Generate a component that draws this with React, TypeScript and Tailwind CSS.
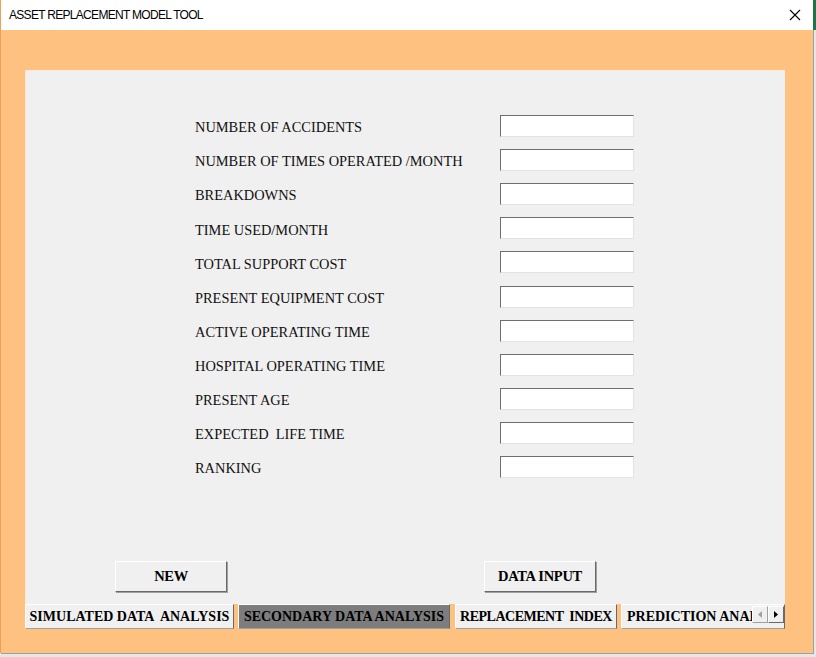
import React from "react";

const fields = [
  "NUMBER OF ACCIDENTS",
  "NUMBER OF TIMES OPERATED /MONTH",
  "BREAKDOWNS",
  "TIME USED/MONTH",
  "TOTAL SUPPORT COST",
  "PRESENT EQUIPMENT COST",
  "ACTIVE OPERATING TIME",
  "HOSPITAL OPERATING TIME",
  "PRESENT AGE",
  "EXPECTED  LIFE TIME",
  "RANKING",
];

const serif = { fontFamily: '"Liberation Serif", "Times New Roman", serif' };

function FormButton({ label }: { label: string }) {
  return (
    <button
      className="h-[31px] w-[112px] border border-t-white border-l-white border-r-[#696969] border-b-[#696969] bg-[#f0f0f0] text-[14.5px] font-bold tracking-[-0.3px] text-black shadow-[1px_1px_0_#a0a0a0] whitespace-pre"
      style={serif}
    >
      {label}
    </button>
  );
}

function Tab({ label, active, className }: { label: string; active?: boolean; className: string }) {
  return (
    <div
      className={`flex h-[25px] shrink-0 items-center justify-center border border-t-white border-l-white border-r-[#696969] border-b-[#a0a0a0] text-[14px] font-bold whitespace-pre ${className} ${
        active ? "bg-[#7d7d7d] text-black" : "bg-[#f0f0f0] text-black"
      }`}
      style={serif}
    >
      {label}
    </div>
  );
}

export default function App() {
  return (
    <div className="relative h-[657px] w-[816px] overflow-hidden bg-[#e7e7e7]">
      <div className="absolute right-0 top-0 h-[30px] w-[3px] bg-[#217346]" />
      <div className="flex h-[653px] w-[813px] flex-col border-l border-[#f0a050] shadow-[1px_1px_0_#a0a0a0]">
        <div className="flex h-[30px] shrink-0 items-center justify-between bg-white pl-[8px] pr-[12px]">
          <span className="text-[12px] text-black" style={{ fontFamily: '"Liberation Sans", Arial, sans-serif', letterSpacing: "-0.7px" }}>
            ASSET REPLACEMENT MODEL TOOL
          </span>
          <svg width="12" height="12" viewBox="0 0 12 12">
            <path d="M1 1 L11 11 M11 1 L1 11" stroke="#000" strokeWidth="1.1" />
          </svg>
        </div>
        <div className="flex flex-1 flex-col bg-[#ffc180] pl-[24px] pr-[28px] pt-[40px]">
          <div className="flex h-[534px] flex-col border-l border-t border-[#fde9d6] bg-[#f0f0f0]">
            <div className="flex flex-col pl-[169px] pt-[40px]">
              {fields.map((f) => (
                <div key={f} className="flex h-[34.1px] items-center">
                  <span className="w-[305px] whitespace-pre text-[14.4px] text-[#111]" style={serif}>
                    {f}
                  </span>
                  <div className="-mt-[4px] h-[22px] w-[134px] border border-t-[#6e6e6e] border-l-[#6e6e6e] border-r-[#e3e3e3] border-b-[#e3e3e3] bg-white" />
                </div>
              ))}
            </div>
            <div className="mt-auto flex pb-[12px] pl-[89px]">
              <FormButton label="NEW" />
              <div className="ml-[257px]">
                <FormButton label="DATA INPUT" />
              </div>
            </div>
          </div>
          <div className="flex h-[26px] w-[760px] overflow-hidden">
            <Tab label="SIMULATED DATA  ANALYSIS" className="w-[209px]" />
            <Tab label="SECONDARY DATA ANALYSIS" className="ml-[4px] w-[212px]" active />
            <Tab label="REPLACEMENT  INDEX" className="ml-[5px] w-[162px] tracking-[-0.5px]" />
            <div className="relative ml-[4px] flex h-[25px] w-[164px] shrink-0 items-center overflow-hidden border border-t-white border-l-white border-r-[#696969] border-b-[#a0a0a0] bg-[#f0f0f0] pl-[5px] text-[14px] font-bold whitespace-pre" style={serif}>
              PREDICTION ANALYSIS
              <div className="absolute right-0 top-[1px] flex h-[17px]">
                <div className="flex w-[16px] items-center justify-center border border-t-white border-l-white border-r-[#a0a0a0] border-b-[#a0a0a0] bg-[#f0f0f0]">
                  <svg width="4" height="7" viewBox="0 0 4 7"><path d="M4 0 L0 3.5 L4 7 Z" fill="#a0a0a0" /></svg>
                </div>
                <div className="flex w-[16px] items-center justify-center border border-t-white border-l-white border-r-[#696969] border-b-[#696969] bg-[#f0f0f0]">
                  <svg width="4" height="7" viewBox="0 0 4 7"><path d="M0 0 L4 3.5 L0 7 Z" fill="#000" /></svg>
                </div>
              </div>
            </div>
          </div>
        </div>
      </div>
    </div>
  );
}
